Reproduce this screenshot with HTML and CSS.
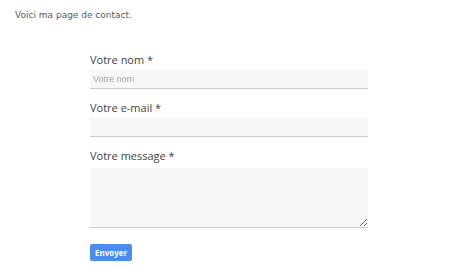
FILE: index.html
```html
<!DOCTYPE html>
<html>
<head>
<meta charset="utf-8">
<title>Contact</title>
<link rel="stylesheet" href="styles.css">
</head>
<body>

<p class="intro">Voici ma page de contact.</p>

<form class="contact" name="contact">
  <div class="field">
    <label for="nom">Votre nom *</label>
    <input type="text" id="nom" placeholder="Votre nom">
  </div>

  <div class="field">
    <label for="email">Votre e-mail *</label>
    <input type="text" id="email">
  </div>

  <div class="field">
    <label for="message">Votre message *</label>
    <textarea id="message"></textarea>
  </div>

  <button type="button" class="sendbtn">Envoyer</button>
</form>

</body>
</html>
```

FILE: styles.css
```css
body {
    margin: 0;
    background: #fff;
}

.intro {
    font-family: "DejaVu Sans", Verdana, sans-serif;
    font-size: 9px;
    color: #5a5a5a;
    margin: 0;
    padding: 10px 0 0 15px;
}

.contact {
    width: 278px;
    margin: 32px 0 0 90px;
    font-family: "Open Sans", sans-serif;
}

.field {
    margin-bottom: 11px;
}

.field label {
    display: block;
    font-size: 11px;
    color: #444;
    line-height: 15px;
    margin-bottom: 2px;
}

.field input, .field textarea {
    display: block;
    width: 100%;
    box-sizing: border-box;
    border: none;
    border-bottom: 1px solid #ccc;
    background: #f7f7f7;
    font-family: "Liberation Sans", Arial, sans-serif;
    font-size: 9px;
    padding: 0 3px;
    margin: 0;
    outline: none;
}

.field input {
    height: 20px;
}

.field textarea {
    height: 60px;
    margin-top: 5px;
    resize: vertical;
}

.field input::placeholder {
    color: #aaa;
}

.sendbtn {
    font-family: "Open Sans", sans-serif;
    font-weight: bold;
    font-size: 8px;
    color: #fff;
    background-color: #4a8cf0;
    border: none;
    border-radius: 2px;
    width: 42px;
    height: 17px;
    padding: 0;
    margin-top: 3px;
    cursor: pointer;
}
```
